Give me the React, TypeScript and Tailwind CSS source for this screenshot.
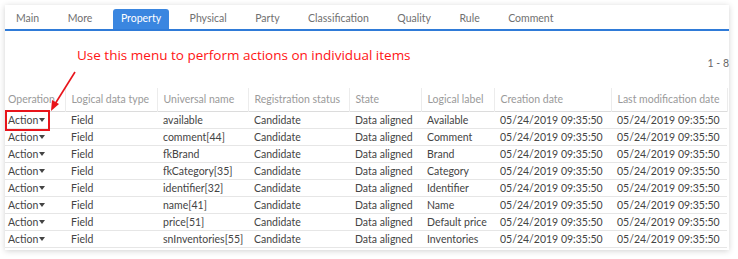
import React from 'react';

const tabs = ['Main', 'More', 'Property', 'Physical', 'Party', 'Classification', 'Quality', 'Rule', 'Comment'];

const columns = [
  { label: 'Operation', width: 60 },
  { label: 'Logical data type', width: 92 },
  { label: 'Universal name', width: 91 },
  { label: 'Registration status', width: 101 },
  { label: 'State', width: 72 },
  { label: 'Logical label', width: 73 },
  { label: 'Creation date', width: 117 },
  { label: 'Last modification date', width: 116 },
];

const rows = [
  ['available', 'Available'],
  ['comment[44]', 'Comment'],
  ['fkBrand', 'Brand'],
  ['fkCategory[35]', 'Category'],
  ['identifier[32]', 'Identifier'],
  ['name[41]', 'Name'],
  ['price[51]', 'Default price'],
  ['snInventories[55]', 'Inventories'],
];

const stamp = '05/24/2019 09:35:50';

function Caret() {
  return (
    <svg width="6" height="4" viewBox="0 0 6 4" className="inline-block ml-[1px] mb-[2px]">
      <polygon points="0,0 6,0 3,4" fill="#444" />
    </svg>
  );
}

export default function App() {
  return (
    <div
      className="relative w-[738px] h-[259px] bg-white pt-[5px] pl-[5px] overflow-hidden"
      style={{ fontFamily: 'Lato, "Open Sans", sans-serif' }}
    >
      <div className="relative w-[724px] h-[245px] bg-white overflow-hidden shadow-[0_1px_6px_rgba(0,0,0,0.18)]">
        {/* TABS */}
        <div className="flex items-end gap-[12.5px] pl-[3px] h-[26px] border-b-[2px] border-[#2f7bd8]">
          {tabs.map((t) => (
            <div
              key={t}
              className={`h-[20px] px-[8px] flex items-center text-[10.5px] rounded-t-[3px] ${
                t === 'Property' ? 'bg-[#3a86e0] text-white' : 'text-[#707070]'
              }`}
            >
              {t}
            </div>
          ))}
        </div>

        {/* ANNOTATION */}
        <div className="relative h-[57px]">
          <div
            className="absolute left-[72px] top-[15px] text-[13.5px] leading-[18px] text-[#ff1414]"
            style={{ fontFamily: '"Open Sans", "Noto Sans", sans-serif' }}
          >
            Use this menu to perform actions on individual items
          </div>
          <div className="absolute right-[0px] top-[25px] text-[10.5px] text-[#666]">1 - 8</div>
        </div>

        {/* TABLE */}
        <table className="table-fixed border-collapse text-[10.5px] leading-[16px]">
          <colgroup>
            {columns.map((c) => (
              <col key={c.label} style={{ width: c.width }} />
            ))}
          </colgroup>
          <thead>
            <tr className="h-[23px] border-b border-[#dcdcdc]">
              {columns.map((c, i) => (
                <th
                  key={c.label}
                  className={`text-left font-normal text-[#9a9a9a] whitespace-nowrap overflow-hidden border-r border-[#ececec] ${
                    i === 0 ? 'pl-[3px]' : 'pl-[6px]'
                  }`}
                >
                  {c.label}
                </th>
              ))}
            </tr>
          </thead>
          <tbody>
            {rows.map(([name, label]) => (
              <tr key={name} className="h-[17px] border-b border-[#e6e6e6] text-[#444]">
                <td className="pl-[3px] whitespace-nowrap">
                  Action
                  <Caret />
                </td>
                <td className="pl-[6px]">Field</td>
                <td className="pl-[6px] whitespace-nowrap">{name}</td>
                <td className="pl-[6px]">Candidate</td>
                <td className="pl-[6px] whitespace-nowrap">Data aligned</td>
                <td className="pl-[6px] whitespace-nowrap">{label}</td>
                <td className="pl-[6px] whitespace-nowrap">{stamp}</td>
                <td className="pl-[6px] whitespace-nowrap">{stamp}</td>
              </tr>
            ))}
          </tbody>
        </table>
      </div>

      {/* highlight box on first action */}
      <div className="absolute left-[5px] top-[110px] w-[45px] h-[21px] border-2 border-[#e8141b]" />

      {/* arrow */}
      <svg className="absolute left-0 top-0" width="738" height="259" viewBox="0 0 738 259">
        <line x1="75" y1="72" x2="55" y2="104" stroke="#e8141b" strokeWidth="1.6" />
        <polygon points="51,111 52,100 59,104" fill="#e8141b" />
      </svg>
    </div>
  );
}
